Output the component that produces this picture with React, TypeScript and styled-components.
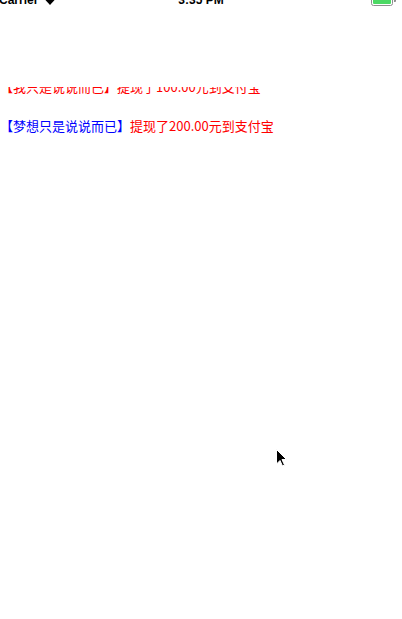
import React from "react";
import styled, { createGlobalStyle } from "styled-components";

const Global = createGlobalStyle`
  html, body { margin: 0; padding: 0; background: #fff; }
  body { font-family: "Liberation Sans", "Noto Sans CJK SC", sans-serif; }
`;

const Screen = styled.div`
  position: relative;
  width: 402px;
  height: 619px;
  overflow: hidden;
  background: #fff;
`;

const StatusBar = styled.div`
  display: grid;
  grid-template-columns: 1fr auto 1fr;
  align-items: center;
  height: 20px;
  margin-top: -10px;
  font: 600 12px "Liberation Sans", Arial, sans-serif;
  color: #000;
`;

const Left = styled.div`
  display: flex;
  align-items: center;
  gap: 6px;
  margin-left: -1px;
`;

const Time = styled.div`
  text-align: center;
`;

const Right = styled.div`
  display: flex;
  justify-content: flex-end;
  align-items: center;
  gap: 1px;
  padding-right: 6px;
`;

const Battery = styled.div`
  width: 18px;
  height: 8px;
  border: 1px solid #8e8e8e;
  border-radius: 2.5px;
  padding: 1px;
  box-sizing: content-box;
`;

const BatteryFill = styled.div`
  width: 100%;
  height: 100%;
  background: #4cd964;
  border-radius: 1px;
`;

const BatteryTip = styled.div`
  width: 2px;
  height: 4px;
  background: #8e8e8e;
  border-radius: 0 1px 1px 0;
`;

const Ticker = styled.div`
  margin-top: 77px;
  height: 60px;
  overflow: hidden;
`;

const Track = styled.div<{ $offset: number }>`
  transform: translateY(${(p) => p.$offset}px);
`;

const Row = styled.div`
  height: 39px;
  line-height: 39px;
  font-size: 13px;
  font-family: "Noto Sans CJK SC", "Liberation Sans", sans-serif;
  white-space: nowrap;
  color: #ff0000;
`;

const Name = styled.span<{ $color: string }>`
  color: ${(p) => p.$color};
`;

const Cursor = styled.svg`
  position: absolute;
  left: 275px;
  top: 448px;
`;

const rows = [
  { name: "【我只是说说而已】", color: "#ff0000", text: "提现了100.00元到支付宝" },
  { name: "【梦想只是说说而已】", color: "#0000ff", text: "提现了200.00元到支付宝" },
];

export default function App() {
  return (
    <Screen>
      <Global />
      <StatusBar>
        <Left>
          <span>Carrier</span>
          <svg width="12" height="9" viewBox="0 0 12 9">
            <path d="M6 9 L0.5 3 A8 8 0 0 1 11.5 3 Z" fill="#000" />
          </svg>
        </Left>
        <Time>3:35 PM</Time>
        <Right>
          <Battery>
            <BatteryFill />
          </Battery>
          <BatteryTip />
        </Right>
      </StatusBar>
      <Ticker>
        <Track $offset={-20}>
          {rows.map((r) => (
            <Row key={r.name}>
              <Name $color={r.color}>{r.name}</Name>
              {r.text}
            </Row>
          ))}
        </Track>
      </Ticker>
      <Cursor width="13" height="20" viewBox="0 0 13 20">
        <path
          d="M1.5 1.5 L1.5 16 L5 12.5 L7.5 18 L9.5 17 L7 11.5 L11.5 11.5 Z"
          fill="#000"
          stroke="#fff"
          strokeWidth="1"
          strokeLinejoin="round"
        />
      </Cursor>
    </Screen>
  );
}
